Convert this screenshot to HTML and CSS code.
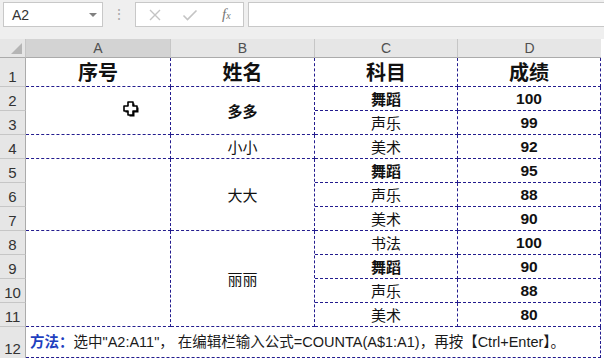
FILE: index.html
```html
<!DOCTYPE html>
<html lang="zh-CN">
<head>
    <meta charset="UTF-8">
    <title>COUNTA 序号</title>
    <link rel="stylesheet" href="styles.css">
</head>
<body>
    <div class="formula-bar">
        <div class="name-box">
            <span>A2</span>
            <span class="caret"></span>
        </div>
        <div class="grip">⋮</div>
        <div class="fx-box">
            <svg class="btn" width="14" height="14" viewBox="0 0 14 14">
                <path d="M2 2 L12 12 M12 2 L2 12" stroke="#c4c4c4" stroke-width="1.4" fill="none"/>
            </svg>
            <svg class="btn" width="16" height="14" viewBox="0 0 16 14">
                <path d="M1.5 7.5 L5.5 11.5 L14.5 2.5" stroke="#c4c4c4" stroke-width="1.6" fill="none"/>
            </svg>
            <span class="fx">f<sub>x</sub></span>
        </div>
        <div class="formula-input"></div>
    </div>

    <table class="sheet">
        <colgroup>
            <col class="c-rh">
            <col class="c-a">
            <col class="c-b">
            <col class="c-c">
            <col class="c-d">
        </colgroup>
        <tr class="col-heads">
            <th class="corner"><span class="tri"></span></th>
            <th class="sel">A</th>
            <th>B</th>
            <th>C</th>
            <th>D</th>
        </tr>
        <tr class="row-1">
            <th class="rh">1</th>
            <td class="title">序号</td>
            <td class="title">姓名</td>
            <td class="title">科目</td>
            <td class="title">成绩</td>
        </tr>
        <tr>
            <th class="rh">2</th>
            <td rowspan="2"></td>
            <td rowspan="2" class="bold">多多</td>
            <td class="bold">舞蹈</td>
            <td class="num">100</td>
        </tr>
        <tr>
            <th class="rh">3</th>
            <td>声乐</td>
            <td class="num">99</td>
        </tr>
        <tr>
            <th class="rh">4</th>
            <td></td>
            <td>小小</td>
            <td>美术</td>
            <td class="num">92</td>
        </tr>
        <tr>
            <th class="rh">5</th>
            <td rowspan="3"></td>
            <td rowspan="3">大大</td>
            <td class="bold">舞蹈</td>
            <td class="num">95</td>
        </tr>
        <tr>
            <th class="rh">6</th>
            <td>声乐</td>
            <td class="num">88</td>
        </tr>
        <tr>
            <th class="rh">7</th>
            <td>美术</td>
            <td class="num">90</td>
        </tr>
        <tr>
            <th class="rh">8</th>
            <td rowspan="4"></td>
            <td rowspan="4">丽丽</td>
            <td>书法</td>
            <td class="num">100</td>
        </tr>
        <tr>
            <th class="rh">9</th>
            <td class="bold">舞蹈</td>
            <td class="num">90</td>
        </tr>
        <tr>
            <th class="rh">10</th>
            <td>声乐</td>
            <td class="num">88</td>
        </tr>
        <tr>
            <th class="rh">11</th>
            <td>美术</td>
            <td class="num">80</td>
        </tr>
        <tr class="row-12">
            <th class="rh">12</th>
            <td colspan="4" class="note"><b>方法：</b>选中"A2:A11"， 在编辑栏输入公式=COUNTA(A$1:A1)，再按【Ctrl+Enter】。</td>
        </tr>
    </table>

    <!-- mouse pointer over A2 -->
    <svg class="cursor" width="17" height="17" viewBox="0 0 17 17">
        <path d="M5 1 H10 V5 H14 V10 H10 V14 H5 V10 H1 V5 H5 Z" fill="#000" transform="translate(1.5 1.5)"/>
        <path d="M5 1 H10 V5 H14 V10 H10 V14 H5 V10 H1 V5 H5 Z" fill="#fff" stroke="#000" stroke-width="1.6" stroke-linejoin="round"/>
    </svg>
</body>
</html>
```

FILE: styles.css
```css
/* General Styles */
body {
    margin: 0;
    width: 604px;
    height: 359px;
    overflow: hidden;
    background-color: #FFFFFF;
    font-family: "Liberation Sans", "Noto Sans CJK SC", sans-serif;
    color: #111111;
    position: relative;
}

/* Formula bar */
.formula-bar {
    display: flex;
    align-items: flex-start;
    height: 39px;
    padding: 2px 0 0 3px;
    box-sizing: border-box;
    background-color: #EFEFEF;
}

.name-box {
    display: flex;
    align-items: center;
    justify-content: space-between;
    width: 100px;
    height: 25px;
    box-sizing: border-box;
    padding: 0 5px 0 8px;
    background-color: #FFFFFF;
    border: 1px solid #C8C8C8;
    font-size: 14px;
    color: #333333;
}

.caret {
    width: 0;
    height: 0;
    border-left: 4px solid transparent;
    border-right: 4px solid transparent;
    border-top: 4px solid #808080;
}

.grip {
    width: 32px;
    text-align: center;
    color: #A8A8A8;
    font-size: 14px;
    line-height: 25px;
}

.fx-box {
    display: flex;
    align-items: center;
    width: 109px;
    height: 25px;
    box-sizing: border-box;
    padding-left: 12px;
    background-color: #FFFFFF;
    border: 1px solid #C8C8C8;
}

.fx-box .btn {
    margin-right: 20px;
}

.fx-box .fx {
    margin-left: 4px;
    font-family: "Liberation Serif", serif;
    font-style: italic;
    font-size: 15px;
    color: #777777;
}

.fx sub {
    font-size: 10px;
    vertical-align: 0;
}

.formula-input {
    flex: 1;
    height: 25px;
    margin-left: 4px;
    background-color: #FFFFFF;
    border: 1px solid #C8C8C8;
    border-right: none;
    box-sizing: border-box;
}

/* Sheet */
.sheet {
    border-collapse: separate;
    border-spacing: 0;
    table-layout: fixed;
    width: 601px;
}

.c-rh { width: 26px; }
.c-a { width: 145px; }
.c-b { width: 144px; }
.c-c { width: 143px; }
.c-d { width: 143px; }

.sheet th,
.sheet td {
    box-sizing: border-box;
    padding: 0;
}

.col-heads th {
    height: 19px;
    background-color: #E6E6E6;
    border-right: 1px solid #C6C6C6;
    border-bottom: 1px solid #ABABAB;
    font-weight: normal;
    font-size: 14px;
    line-height: 17px;
    color: #505050;
}

.col-heads th.sel {
    background-color: #D3D3D3;
}

.col-heads th:last-child {
    border-right: none;
}

.corner {
    position: relative;
}

.corner .tri {
    position: absolute;
    right: 3px;
    bottom: 3px;
    width: 0;
    height: 0;
    border-left: 11px solid transparent;
    border-bottom: 11px solid #B5B5B5;
}

.rh {
    height: 24px;
    background-color: #E6E6E6;
    border-right: 1px solid #ABABAB;
    border-bottom: 1px solid #C6C6C6;
    font-weight: normal;
    font-size: 15px;
    line-height: 18px;
    color: #333333;
    vertical-align: bottom;
}

.row-1 .rh {
    height: 29px;
}

.row-12 .rh {
    height: 31px;
    border-bottom: none;
}

.sheet td {
    border-right: 1px dashed #231C8E;
    border-bottom: 1px dashed #231C8E;
    text-align: center;
    vertical-align: middle;
    font-size: 15px;
    font-family: "Noto Sans CJK SC", sans-serif;
    line-height: 18px;
}

.sheet td.title {
    font-size: 20px;
    font-weight: bold;
}

.sheet td.bold {
    font-weight: bold;
}

.sheet td.num {
    font-family: "Liberation Sans", sans-serif;
    font-weight: bold;
    font-size: 15.5px;
}

.sheet td.note {
    text-align: left;
    padding-left: 4px;
    font-family: "Liberation Sans", "Noto Sans CJK SC", sans-serif;
    font-size: 14.5px;
    white-space: nowrap;
    color: #1A1A1A;
}

.note b {
    color: #1F3FBF;
}

.cursor {
    position: absolute;
    left: 123px;
    top: 101px;
}
```
